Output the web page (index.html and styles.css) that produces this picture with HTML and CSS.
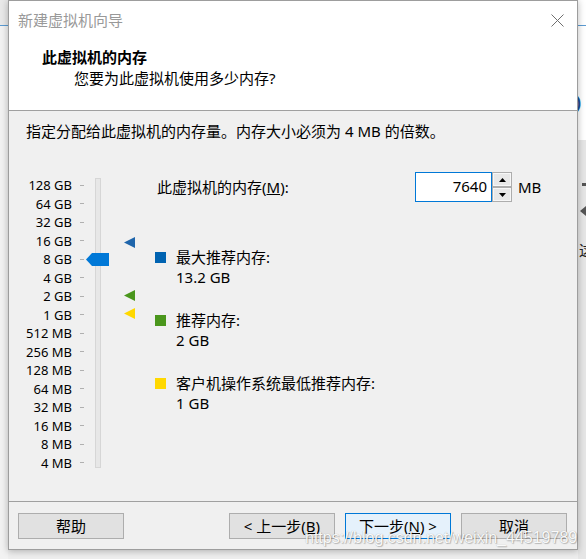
FILE: index.html
```html
<!DOCTYPE html>
<html lang="zh-CN">
<head>
<meta charset="utf-8">
<title>新建虚拟机向导</title>
<link rel="stylesheet" href="styles.css">
</head>
<body>
<div class="screen">
  <div class="bg-left">
    <div class="bg-left-top"></div>
    <div class="bg-line"></div>
    <div class="bg-left-rest"></div>
  </div>
  <div class="dialog">
    <div class="header">
      <div class="titlebar">
        <span class="title">新建虚拟机向导</span>
        <svg class="close" width="13" height="13" viewBox="0 0 13 13"><path d="M0.5 0.5 L12.5 12.5 M12.5 0.5 L0.5 12.5" stroke="#6f6f6f" stroke-width="1" fill="none"/></svg>
      </div>
      <div class="heading">此虚拟机的内存</div>
      <div class="subheading">您要为此虚拟机使用多少内存?</div>
    </div>
    <div class="body">
      <div class="desc">指定分配给此虚拟机的内存量。内存大小必须为 4 MB 的倍数。</div>
      <div class="content">
        <div class="scale">
          <div class="labels">
            <div class="row"><span class="lbl">128 GB</span><span class="tick"></span></div>
            <div class="row"><span class="lbl">64 GB</span><span class="tick"></span></div>
            <div class="row"><span class="lbl">32 GB</span><span class="tick"></span></div>
            <div class="row"><span class="lbl">16 GB</span><span class="tick"></span></div>
            <div class="row"><span class="lbl">8 GB</span><span class="tick"></span></div>
            <div class="row"><span class="lbl">4 GB</span><span class="tick"></span></div>
            <div class="row"><span class="lbl">2 GB</span><span class="tick"></span></div>
            <div class="row"><span class="lbl">1 GB</span><span class="tick"></span></div>
            <div class="row"><span class="lbl">512 MB</span><span class="tick"></span></div>
            <div class="row"><span class="lbl">256 MB</span><span class="tick"></span></div>
            <div class="row"><span class="lbl">128 MB</span><span class="tick"></span></div>
            <div class="row"><span class="lbl">64 MB</span><span class="tick"></span></div>
            <div class="row"><span class="lbl">32 MB</span><span class="tick"></span></div>
            <div class="row"><span class="lbl">16 MB</span><span class="tick"></span></div>
            <div class="row"><span class="lbl">8 MB</span><span class="tick"></span></div>
            <div class="row"><span class="lbl">4 MB</span><span class="tick"></span></div>
          </div>
          <div class="slider">
            <div class="track"></div>
            <svg class="thumb" width="23" height="13" viewBox="0 0 23 13"><polygon points="0,6.5 6,0 23,0 23,13 6,13" fill="#0078d7"/></svg>
            <svg class="marker m-max" width="11" height="11" viewBox="0 0 11 11"><polygon points="0,5.5 11,0 11,11" fill="#1f65ab"/></svg>
            <svg class="marker m-rec" width="11" height="11" viewBox="0 0 11 11"><polygon points="0,5.5 11,0 11,11" fill="#4a961c"/></svg>
            <svg class="marker m-min" width="11" height="11" viewBox="0 0 11 11"><polygon points="0,5.5 11,0 11,11" fill="#ffd800"/></svg>
          </div>
        </div>
        <div class="settings">
          <div class="mem-row">
            <span class="mem-label">此虚拟机的内存(<u>M</u>):</span>
            <div class="spin-input">7640</div>
            <div class="spin-btns">
              <div class="spin-btn"><svg width="7" height="4" viewBox="0 0 7 4"><polygon points="0,4 3.5,0 7,4" fill="#000"/></svg></div>
              <div class="spin-btn"><svg width="7" height="4" viewBox="0 0 7 4"><polygon points="0,0 7,0 3.5,4" fill="#000"/></svg></div>
            </div>
            <span class="unit">MB</span>
          </div>
          <div class="legend">
            <div class="item">
              <span class="sq sq-blue"></span>
              <div class="item-text"><div>最大推荐内存:</div><div>13.2 GB</div></div>
            </div>
            <div class="item">
              <span class="sq sq-green"></span>
              <div class="item-text"><div>推荐内存:</div><div>2 GB</div></div>
            </div>
            <div class="item">
              <span class="sq sq-yellow"></span>
              <div class="item-text"><div>客户机操作系统最低推荐内存:</div><div>1 GB</div></div>
            </div>
          </div>
        </div>
      </div>
    </div>
    <div class="footer">
      <button class="btn">帮助</button>
      <div class="spacer"></div>
      <button class="btn">&lt; 上一步(<u>B</u>)</button>
      <button class="btn primary">下一步(<u>N</u>) &gt;</button>
      <button class="btn">取消</button>
    </div>
  </div>
  <div class="bg-right">
    <div class="bg-right-top">
      <div class="bg-right-gap1"></div>
      <div class="bg-line"></div>
      <div class="bg-paren">)</div>
    </div>
    <div class="bg-right-rest">
      <div class="frag-dash"></div>
      <div class="frag-arrow"></div>
      <div class="frag-char">这</div>
    </div>
  </div>
</div>
<div class="watermark">https://blog.csdn.net/weixin_44519789</div>
</body>
</html>
```

FILE: styles.css
```css
html, body {
  margin: 0;
  padding: 0;
}
body {
  background: #eeeeee;
  width: 586px;
  height: 559px;
  overflow: hidden;
  position: relative;
}
.screen {
  display: flex;
  align-items: flex-start;
  height: 559px;
}
.bg-left {
  width: 8px;
  height: 559px;
  display: flex;
  flex-direction: column;
}
.bg-left-top {
  height: 25px;
  background: #e9e9e9;
}
.bg-line {
  height: 1px;
  background: #5b9bd2;
}
.bg-left-rest {
  flex: 1;
  background: #f2f2f2;
}
.dialog {
  width: 568px;
  border: 1px solid #9d9d9d;
  background: #f0f0f0;
  box-shadow: 0 1px 7px rgba(0, 0, 0, 0.28);
  font-family: "Noto Sans", "Noto Sans CJK SC", sans-serif;
  font-size: 15px;
  color: #000;
  position: relative;
  z-index: 1;
}
.header {
  background: #ffffff;
  height: 109px;
  border-bottom: 1px solid #a0a0a0;
}
.titlebar {
  height: 38px;
  display: flex;
  align-items: center;
  justify-content: space-between;
  padding: 0 13px 0 9px;
}
.title {
  color: #999999;
  line-height: 20px;
}
.close {
  display: block;
}
.heading {
  margin-top: 8px;
  padding-left: 33px;
  line-height: 20px;
  font-weight: bold;
}
.subheading {
  margin-top: 1px;
  padding-left: 65px;
  line-height: 20px;
}
.body {
  height: 391px;
  border-bottom: 1px solid #a0a0a0;
  padding-left: 17px;
  box-sizing: border-box;
}
.desc {
  padding-top: 10px;
  line-height: 20px;
}
.content {
  margin-top: 31px;
  display: flex;
  align-items: flex-start;
}
.scale {
  display: flex;
  padding-top: 4px;
}
.labels {
  width: 58px;
  font-size: 13px;
}
.row {
  height: 18.5px;
  display: flex;
  align-items: center;
}
.lbl {
  width: 46px;
  text-align: right;
  margin-right: 8px;
  line-height: 18px;
  white-space: nowrap;
}
.tick {
  width: 4px;
  height: 1px;
  background: #b0b0b0;
}
.slider {
  width: 56px;
  height: 296px;
  position: relative;
}
.track {
  position: absolute;
  left: 11px;
  top: 2px;
  width: 4px;
  height: 288px;
  background: #e7e7e7;
  border: 1px solid #d6d6d6;
}
.thumb {
  position: absolute;
  left: 2px;
  top: 77px;
}
.marker {
  position: absolute;
  left: 40px;
}
.m-max { top: 61px; }
.m-rec { top: 114px; }
.m-min { top: 132px; }
.settings {
  margin-left: 15px;
}
.mem-row {
  display: flex;
  align-items: center;
  height: 30px;
}
.mem-label {
  width: 258px;
  margin-left: 2px;
  line-height: 20px;
  white-space: nowrap;
}
.spin-input {
  width: 77px;
  height: 30px;
  box-sizing: border-box;
  border: 1px solid #0078d7;
  background: #ffffff;
  text-align: right;
  padding-right: 4px;
  line-height: 26px;
}
.spin-btns {
  width: 20px;
  height: 30px;
  display: flex;
  flex-direction: column;
}
.spin-btn {
  flex: 1;
  box-sizing: border-box;
  border: 1px solid #adadad;
  box-shadow: inset 0 0 0 1px #f7f7f7;
  background: #e8e8e8;
  display: flex;
  align-items: center;
  justify-content: center;
}
.spin-btn svg {
  display: block;
}
.unit {
  margin-left: 6px;
  line-height: 20px;
}
.legend {
  margin-top: 45px;
  display: flex;
  flex-direction: column;
  gap: 23px;
}
.item {
  display: flex;
  align-items: flex-start;
}
.sq {
  width: 11px;
  height: 11px;
  margin-top: 5px;
  margin-right: 10px;
  flex: none;
}
.sq-blue { background: #0063b1; }
.sq-green { background: #4a961c; }
.sq-yellow { background: #ffd800; }
.item-text {
  line-height: 20px;
  white-space: nowrap;
}
.footer {
  height: 47px;
  box-sizing: border-box;
  padding: 11px 10px 10px 9px;
  display: flex;
  gap: 10px;
}
.spacer {
  flex: 1;
}
.btn {
  width: 106px;
  height: 26px;
  box-sizing: border-box;
  border: 1px solid #adadad;
  background: #e1e1e1;
  font-family: "Noto Sans", "Noto Sans CJK SC", sans-serif;
  font-size: 15px;
  color: #000;
  padding: 0;
  line-height: 22px;
  margin: 0;
}
.primary {
  background: #e5f1fb;
  border-color: #0078d7;
}
.bg-right {
  width: 8px;
  height: 559px;
  display: flex;
  flex-direction: column;
  overflow: hidden;
}
.bg-right-top {
  height: 140px;
  background: #ffffff;
  display: flex;
  flex-direction: column;
}
.bg-right-gap1 {
  height: 25px;
}
.bg-paren {
  margin-top: 66px;
  margin-left: -3px;
  color: #1d4f91;
  font-family: "Noto Sans", sans-serif;
  font-size: 18px;
  line-height: 20px;
  font-weight: bold;
}
.bg-right-rest {
  flex: 1;
  background: #e6e6e6;
  display: flex;
  flex-direction: column;
  align-items: flex-end;
}
.frag-dash {
  margin-top: 43px;
  width: 4px;
  height: 3px;
  background: #555555;
}
.frag-arrow {
  margin-top: 20px;
  width: 0;
  height: 0;
  border-top: 5px solid transparent;
  border-bottom: 5px solid transparent;
  border-right: 6px solid #555555;
  margin-right: 0;
}
.frag-char {
  margin-top: 24px;
  margin-right: -8px;
  font-family: "Noto Sans CJK SC", sans-serif;
  font-size: 15px;
  line-height: 20px;
  color: #222;
}
.watermark {
  position: absolute;
  left: 305px;
  top: 529px;
  z-index: 2;
  font-family: "Liberation Sans", Arial, sans-serif;
  font-size: 16px;
  line-height: 18px;
  color: rgba(255, 255, 255, 0.95);
  text-shadow: 1px 1px 1px rgba(0, 0, 0, 0.22), 0 0 1px rgba(0, 0, 0, 0.3);
  white-space: nowrap;
}
```
